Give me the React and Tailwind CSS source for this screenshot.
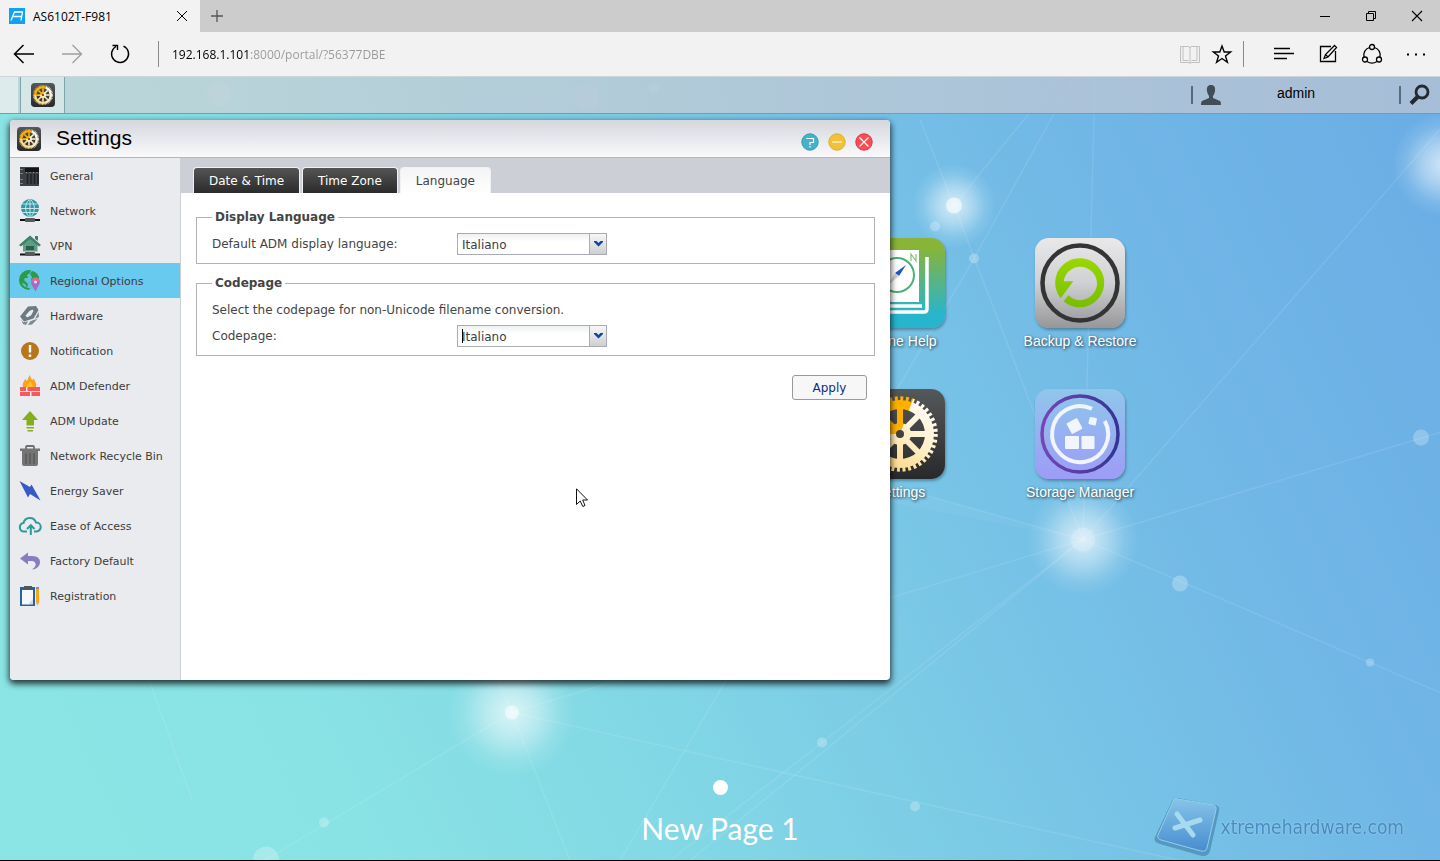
import React, { useId, useState } from 'react';

const GLOWS = [
  { x: 954, y: 206, r: 42, core: 8, alpha: 0.6 },
  { x: 512, y: 713, r: 64, core: 7, alpha: 0.5 },
  { x: 1083, y: 540, r: 56, core: 12, alpha: 0.2 },
  { x: 1444, y: 165, r: 52, core: 0, alpha: 0 },
];

const DOTS = [
  [219, 95, 12], [587, 97, 12], [654, 89, 5], [974, 259, 5], [935, 227, 5], [1421, 438, 8],
  [1180, 584, 8], [1370, 663, 4], [822, 743, 5], [915, 807, 5], [324, 823, 5], [266, 860, 13],
];

const LINES = [
  [920, 120, 954, 206], [954, 206, 1083, 540], [954, 206, 1060, 76], [974, 259, 1075, 76],
  [974, 259, 620, 861], [1083, 540, 1440, 693], [1083, 540, 512, 380], [1083, 540, 1440, 130],
  [1083, 540, 1440, 433], [1083, 540, 690, 861], [1083, 540, 512, 713], [1083, 540, 1095, 76],
  [512, 713, 1180, 861], [512, 713, 266, 860], [512, 713, 570, 861], [512, 713, 420, 500],
  [822, 743, 670, 861], [822, 743, 1083, 540], [120, 600, 192, 800],
];

function Wallpaper() {
  return (
    <svg
      className="absolute inset-0 h-full w-full"
      viewBox="0 76 1440 785"
      preserveAspectRatio="xMidYMid slice"
      aria-hidden="true"
    >
      <defs>
        <linearGradient id="sky" gradientUnits="userSpaceOnUse" x1="0" y1="800" x2="1440" y2="100">
          <stop offset="0" stopColor="#8be5e4" />
          <stop offset="0.2" stopColor="#89e2e4" />
          <stop offset="0.4" stopColor="#81d6e5" />
          <stop offset="0.6" stopColor="#78c5e6" />
          <stop offset="0.8" stopColor="#70b6e6" />
          <stop offset="1" stopColor="#6aade5" />
        </linearGradient>
        <radialGradient id="glow">
          <stop offset="0" stopColor="#fff" stopOpacity="0.7" />
          <stop offset="0.4" stopColor="#fff" stopOpacity="0.42" />
          <stop offset="0.75" stopColor="#fff" stopOpacity="0.12" />
          <stop offset="1" stopColor="#fff" stopOpacity="0" />
        </radialGradient>
      </defs>
      <rect y="76" width="1440" height="785" fill="url(#sky)" />
      <path d="M1083 540L512 380V430Z" fill="#fff" opacity="0.04" />
      <g stroke="#fff" strokeOpacity="0.1" strokeWidth="1.5">
        {LINES.map(([x1, y1, x2, y2], i) => (
          <line key={i} x1={x1} y1={y1} x2={x2} y2={y2} />
        ))}
      </g>
      {GLOWS.map((g) => (
        <g key={g.x}>
          <circle cx={g.x} cy={g.y} r={g.r} fill="url(#glow)" />
          <circle cx={g.x} cy={g.y} r={g.core} fill="#fff" opacity={g.alpha} />
        </g>
      ))}
      {DOTS.map(([x, y, r]) => (
        <circle key={x} cx={x} cy={y} r={r} fill="#fff" opacity="0.25" />
      ))}
    </svg>
  );
}

function GearIcon({ className }) {
  const id = useId();
  return (
    <svg className={className} viewBox="0 0 90 90" aria-hidden="true">
      <defs>
        <linearGradient id={`${id}b`} x1="0" y1="0" x2="0" y2="1">
          <stop offset="0" stopColor="#55585a" />
          <stop offset="1" stopColor="#28292b" />
        </linearGradient>
        <linearGradient id={`${id}g`} x1="0.8" y1="0.1" x2="0.2" y2="0.9">
          <stop offset="0" stopColor="#fff" />
          <stop offset="0.45" stopColor="#fff0cc" />
          <stop offset="1" stopColor="#fbcf70" />
        </linearGradient>
        <mask id={`${id}m`}>
          <circle cx="45" cy="45" r="34" fill="#fff" />
          <circle cx="45" cy="45" r="35" fill="none" stroke="#fff" strokeWidth="5.5" strokeDasharray="2.9 2.6" />
          <circle cx="45" cy="45" r="25" fill="#000" />
          <path
            d="M45 20V70M20 45H70M27 27L63 63M63 27L27 63"
            stroke="#fff"
            strokeWidth="6"
          />
          <circle cx="45" cy="45" r="11" fill="#fff" />
          <circle cx="45" cy="45" r="4" fill="#000" />
        </mask>
      </defs>
      <rect width="90" height="90" rx="14" fill={`url(#${id}b)`} />
      <g mask={`url(#${id}m)`}>
        <rect width="90" height="90" fill={`url(#${id}g)`} />
        <path d="M45 45L62 0H0V45Z" fill="#ffb000" />
      </g>
    </svg>
  );
}

function HelpIcon() {
  return (
    <svg className="size-[90px]" viewBox="0 0 90 90" aria-hidden="true">
      <defs>
        <linearGradient id="help" x1="0" y1="0" x2="0" y2="1">
          <stop offset="0.1" stopColor="#88b438" />
          <stop offset="0.85" stopColor="#27b5cd" />
        </linearGradient>
      </defs>
      <rect width="90" height="90" rx="14" fill="url(#help)" />
      <rect x="14" y="12" width="50" height="52" fill="#fff" />
      <path d="M14 68H67M20 74H69Q72 74 72 71V19" fill="none" stroke="#fff" strokeWidth="3.5" />
      <circle cx="42" cy="37" r="17" fill="none" stroke="#4bb07a" strokeWidth="2" />
      <path d="M51 27L44 38L40 35Z" fill="#2052c8" />
      <path d="M40 35L44 38L32 48Z" fill="#ccd3d8" />
      <path d="M56 23V16L61 23V16" fill="none" stroke="#7cc576" strokeWidth="1.2" />
    </svg>
  );
}

function BackupIcon() {
  return (
    <svg className="size-[90px]" viewBox="0 0 90 90" aria-hidden="true">
      <defs>
        <linearGradient id="bk" x1="0" y1="0" x2="0" y2="1">
          <stop offset="0" stopColor="#e9e9ea" />
          <stop offset="0.5" stopColor="#cfd0d3" />
          <stop offset="1" stopColor="#97979a" />
        </linearGradient>
        <linearGradient id="bkg" x1="0" y1="0" x2="0" y2="1">
          <stop offset="0" stopColor="#9bd800" />
          <stop offset="1" stopColor="#79bd00" />
        </linearGradient>
      </defs>
      <rect width="90" height="90" rx="14" fill="url(#bk)" />
      <circle cx="45" cy="45" r="37.5" fill="none" stroke="#343435" strokeWidth="4.5" />
      <path
        d="M25.700 60.200A24.500 24.500 0 1 1 28.600 63.200L33.500 57.300A16.700 16.700 0 1 0 28.700 43.300H38.300Z"
        fill="url(#bkg)"
      />
    </svg>
  );
}

function StorageIcon() {
  return (
    <svg className="size-[90px]" viewBox="0 0 90 90" aria-hidden="true">
      <defs>
        <linearGradient id="st" x1="0" y1="0" x2="0" y2="1">
          <stop offset="0" stopColor="#90c6ec" />
          <stop offset="1" stopColor="#9d9cf6" />
        </linearGradient>
        <linearGradient id="str" x1="0" y1="0" x2="1" y2="0">
          <stop offset="0" stopColor="#7447b6" />
          <stop offset="1" stopColor="#323690" />
        </linearGradient>
      </defs>
      <rect width="90" height="90" rx="14" fill="url(#st)" />
      <circle cx="45" cy="45" r="38" fill="none" stroke="url(#str)" strokeWidth="3.5" />
      <path d="M57 19.800A28 28 0 1 0 69.800 32" fill="none" stroke="#f0f5fe" strokeWidth="4" />
      <g fill="#f0f5fe">
        <rect x="30" y="47" width="14" height="13" rx="1" />
        <rect x="46.500" y="47" width="13" height="13" rx="1" />
        <rect x="33.500" y="31" width="12" height="12" rx="1" transform="rotate(-28 39.500 37)" />
        <rect x="54" y="28.500" width="7.500" height="7.500" rx="1" transform="rotate(12 58 32)" />
      </g>
    </svg>
  );
}

const menu = [
  {
    label: 'General',
    icon: (
      <>
        <rect x="2" y="3" width="19" height="19" fill="#3d4145" />
        <rect x="7" y="4" width="14" height="4" fill="#121416" />
        <path d="M2 5.500H5M2 9.500H5M2 15.500H5M2 19.500H5" stroke="#3f9c7a" />
        <path d="M9.500 10V20M13 10V20M16.500 10V20M20 10V20" stroke="#1f2224" strokeWidth="1.500" />
        <path d="M8 8.500H20" stroke="#9aa0a4" strokeDasharray="1 2.500" />
      </>
    ),
  },
  {
    label: 'Network',
    icon: (
      <>
        <circle cx="12" cy="9" r="9" fill="#2f98a6" />
        <path
          d="M12 0V18M4.500 5H19.500M3 9.500H21M4.500 13.500H19.500M11 1C6.500 5 6.500 13.500 11 17.500M13 1C17.500 5 17.500 13.500 13 17.500"
          fill="none"
          stroke="#d5ecee"
          strokeWidth="0.900"
        />
        <path d="M2 21H22" stroke="#111" strokeWidth="2" />
        <rect x="7" y="19" width="10" height="4" rx="1" fill="#58595b" />
      </>
    ),
  },
  {
    label: 'VPN',
    icon: (
      <>
        <path d="M5 10L12 4L19.500 10V17.500H5Z" fill="#5d9e84" />
        <path d="M1 11L12 1.500L23 11L21 12.500L12 5L3 12.500ZM17 2H20V7L17 5Z" fill="#3f8168" />
        <rect x="8" y="12" width="8" height="4" fill="#2d5e4d" />
        <path d="M2 20.500H22" stroke="#111" strokeWidth="2" />
        <rect x="7" y="18" width="10" height="4" rx="1" fill="#58595b" />
      </>
    ),
  },
  {
    label: 'Regional Options',
    icon: (
      <>
        <circle cx="11" cy="11" r="10" fill="#5fc3e0" />
        <path
          d="M11 1A10 10 0 0 0 1 11A10 10 0 0 0 11 21L12 19C8 19 5 17 4 14L7 15L9 19L10 15L6 11L7 9L10 9L9 6L12 4L13 1.200ZM14 2L12 5L14 8L13 11H17L21 13V8A10 10 0 0 0 14 2Z"
          fill="#2b9c45"
        />
        <path d="M17.500 22.500C14 16 13 15 13 13A4.500 4.500 0 0 1 22 13C22 15 20.500 16.500 17.500 22.500Z" fill="#a66bc0" />
        <path d="M13 13A4.500 4.500 0 0 1 22 13Z" fill="#d56a98" />
        <circle cx="17.500" cy="13" r="1.500" fill="#e9dcf2" />
      </>
    ),
  },
  {
    label: 'Hardware',
    icon: (
      <>
        <path
          fillRule="evenodd"
          d="M10 2.500L18 2L20.500 6L15.500 14.500L6 17.500L2 12.500ZM11.500 7L7.500 11.500L9 13.500L13 11.500L15.500 7L14.500 5.500Z"
          fill="#6c7a82"
        />
        <path d="M20.500 8L21 13L17 15ZM15.500 16L19.500 15L14 20.500L10 21L12 17.500ZM3 15L5 18L10 17.500L8 21L5 20Z" fill="#7d8b93" />
      </>
    ),
  },
  {
    label: 'Notification',
    icon: (
      <>
        <circle cx="12" cy="12" r="9" fill="#b8761a" />
        <path d="M12 6V13.500M12 15.500V18" stroke="#fff" strokeWidth="2.400" />
      </>
    ),
  },
  {
    label: 'ADM Defender',
    icon: (
      <>
        <path d="M5 13C4 9 6 8 7 5L9 7L11.500 1L14 6L16 4.500C17 8 19 9 18 13Z" fill="#faa21b" />
        <path d="M9 13C9 10 11 10 12 7C13 10 15 10 15 13Z" fill="#fdc22e" />
        <path d="M2 13H8V17H2ZM9.500 13H22V17H9.500ZM2 18H12V22H2ZM13.500 18H22V22H13.500Z" fill="#f9575c" />
      </>
    ),
  },
  {
    label: 'ADM Update',
    icon: <path d="M12 2L20 11H16V16.500H8.500V11H4ZM8.500 18H16V19.500H8.500ZM9.500 21H15V22.500H9.500Z" fill="#86ae1c" />,
  },
  {
    label: 'Network Recycle Bin',
    icon: (
      <>
        <path d="M8 5V3Q8 2 9 2H15Q16 2 16 3V5" fill="none" stroke="#6f6f6f" strokeWidth="1.800" />
        <path d="M2 4.500H22V7H2ZM4 7H20V20Q20 22 18 22H6Q4 22 4 20Z" fill="#747474" />
        <path d="M8 9.500V20M12 9.500V20M16 9.500V20" stroke="#555" strokeWidth="1.300" />
      </>
    ),
  },
  {
    label: 'Energy Saver',
    icon: <path d="M1.500 2L12 8L13.500 5.500L22.500 21.500L12 15L10 18.500Z" fill="#3758c8" />,
  },
  {
    label: 'Ease of Access',
    icon: (
      <path
        d="M9 17.500H5.500A4.300 4.300 0 0 1 5.500 9A6.500 6.500 0 0 1 18 8.500A4.500 4.500 0 0 1 18.500 17.500H16M12.800 21V12M9 15L12.800 11.200L16.500 15"
        fill="none"
        stroke="#2f9a9a"
        strokeWidth="2"
      />
    ),
  },
  {
    label: 'Factory Default',
    icon: <path d="M2 9.500L10 3.500V7H14C20 7 22 10 22 13C22 17 19 20 14 20.500C17.500 18 18 16.500 17.500 14.500C17 12.500 15 12 13 12H10V15.500Z" fill="#8a7cbd" />,
  },
  {
    label: 'Registration',
    icon: (
      <>
        <rect x="2" y="3" width="15" height="19" fill="#2563a0" />
        <path d="M4 6H15V16L11 20.500H4Z" fill="#f4f8fb" />
        <path d="M15 15V20.500H10Z" fill="#cfdde9" />
        <rect x="6" y="2" width="8" height="4" fill="#4c5964" />
        <path d="M18 4H21V18L19.500 22L18 18Z" fill="#f6a81c" />
        <path d="M18 3H21V5H18Z" fill="#8a8f95" />
      </>
    ),
  },
];

const apps = [
  { name: 'Online Help', icon: <HelpIcon />, cell: 'col-start-5' },
  { name: 'Backup & Restore', icon: <BackupIcon />, cell: 'col-start-6' },
  { name: 'Settings', icon: <GearIcon className="size-[90px]" />, cell: 'col-start-5' },
  { name: 'Storage Manager', icon: <StorageIcon />, cell: 'col-start-6' },
];

function IconButton({ label, className, children }) {
  return (
    <button
      type="button"
      aria-label={label}
      className={`flex h-full shrink-0 items-center justify-center ${className}`}
    >
      <svg
        className="size-6"
        viewBox="0 0 24 24"
        fill="none"
        stroke="currentColor"
        strokeWidth="1.3"
        aria-hidden="true"
      >
        {children}
      </svg>
    </button>
  );
}

function BrowserChrome() {
  const [url, setUrl] = useState('192.168.1.101:8000/portal/?56377DBE');

  return (
    <header className="shrink-0 bg-[#f2f2f2] font-['Open_Sans',sans-serif] text-xs text-black">
      <div className="flex h-8 bg-[#cccccc]">
        <div className="flex w-[200px] items-center bg-[#f2f2f2] pl-[9px]">
          <svg className="size-4" viewBox="0 0 16 16" aria-hidden="true">
            <rect width="16" height="16" fill="#0da2f5" />
            <path d="M2 12.500L5.500 4H13.500L12 12.500M4.500 8.500H12.500" fill="none" stroke="#fff" strokeWidth="1.300" />
          </svg>
          <span className="mt-0.5 ml-2 flex-1">AS6102T-F981</span>
          <IconButton label="Close tab" className="w-9">
            <path d="M7 7L17 17M17 7L7 17" strokeWidth="1" />
          </IconButton>
        </div>
        <IconButton label="New tab" className="w-[34px] text-[#555]">
          <path d="M12 6V18M6 12H18" />
        </IconButton>
        <div className="flex-1" />
        <IconButton label="Minimize" className="w-[46px]">
          <path d="M7 12.500H17" strokeWidth="1" />
        </IconButton>
        <IconButton label="Restore" className="w-[46px]">
          <path d="M7.500 9.500H14.500V16.500H7.500ZM9.500 9.500V7.500H16.500V14.500H14.500" strokeWidth="1" />
        </IconButton>
        <IconButton label="Close" className="w-[46px]">
          <path d="M7 7L17 17M17 7L7 17" strokeWidth="1.100" />
        </IconButton>
      </div>
      <div className="flex h-11 items-center pr-0.5">
        <IconButton label="Back" className="w-12">
          <path d="M22 12H3M11.500 3L2.500 12L11.500 21" strokeWidth="1.500" />
        </IconButton>
        <IconButton label="Forward" className="w-12 text-[#a0a0a0]">
          <path d="M2 12H21M12.500 3L21.500 12L12.500 21" strokeWidth="1.400" />
        </IconButton>
        <IconButton label="Refresh" className="w-12">
          <path d="M15.500 4.200A8.500 8.500 0 1 1 8 4.500M4.500 3.500H9.500V8" strokeWidth="1.400" />
        </IconButton>
        <div className="ml-3.5 h-[26px] w-px bg-[#8a8a8a]" />
        <input
          type="text"
          aria-label="Address"
          value={url}
          onChange={(e) => setUrl(e.target.value)}
          className="mt-0.5 ml-[13px] min-w-0 flex-1 bg-[linear-gradient(to_right,#000_78px,#999_78px)] bg-clip-text text-transparent caret-black outline-none"
        />
        <IconButton label="Reading view" className="w-8 text-[#c0c0c0]">
          <path d="M2.500 4.500H10Q12 4.500 12 6Q12 4.500 14 4.500H21.500V20.500H14Q12 20.500 12 21.500Q12 20.500 10 20.500H2.500ZM12 6V21M5 4.500V18.500H10.500M19 4.500V18.500H13.500" strokeWidth="1" />
        </IconButton>
        <IconButton label="Add to favorites" className="w-8">
          <path d="M12 4L14.200 10H20.600L15.500 13.900L17.400 20.300L12 16.500L6.600 20.300L8.500 13.900L3.400 10H9.800Z" strokeWidth="1.400" />
        </IconButton>
        <div className="mr-[18px] ml-[5px] h-[26px] w-px bg-[#8a8a8a]" />
        <IconButton label="Hub" className="w-11">
          <path d="M2 6.500H18M2 11.500H22M2 16.500H15" />
        </IconButton>
        <IconButton label="Web note" className="w-11">
          <path d="M15 4.500H4.500V19.500H19.500V9M8 16.500L9.500 12.500L18.500 3.500L20.500 5.500L12 15ZM9.500 12.500L12 15" strokeWidth="1.300" />
        </IconButton>
        <IconButton label="Share" className="w-11">
          <circle cx="12" cy="5" r="2.500" />
          <circle cx="5" cy="17.500" r="2.500" />
          <circle cx="19" cy="17.500" r="2.500" />
          <path d="M9.500 5.500C5 7 3.500 11 4 15M14.500 5.500C19 7 20.500 11 20 15M7 19.500C10 21.500 14 21.500 17 19.500" />
        </IconButton>
        <IconButton label="More" className="w-11">
          <path d="M3 12.500H5M11 12.500H13M19 12.500H21" strokeWidth="2" />
        </IconButton>
      </div>
    </header>
  );
}

function Taskbar() {
  return (
    <div className="relative flex h-[38px] items-stretch border-t border-b border-t-[#ccd6da] border-b-[#6f9fb0] bg-gradient-to-r from-[#c4d5d7]/85 to-[#adbfd6]/90">
      <div className="w-[18px] bg-white/50" />
      <button
        type="button"
        aria-label="Settings"
        className="ml-0.5 flex w-[45px] items-center justify-center border-r border-l border-[#7fa5ab] bg-white/40"
      >
        <GearIcon className="size-6" />
      </button>
      <div className="flex-1" />
      <div className="flex w-[208px] items-center text-[#3d4a54]">
        <div className="h-[18px] w-0.5 bg-[#5b6a78]" />
        <svg className="ml-1.5 size-6" viewBox="0 0 24 24" aria-hidden="true">
          <path d="M12 2C8.500 2 7.500 4.500 8 8C8.300 10.500 9.500 12 10 13V15L3 18Q2 18.500 2 22H22Q22 18.500 21 18L14 15V13C14.500 12 15.700 10.500 16 8C16.500 4.500 15.500 2 12 2Z" fill="#424d57" />
        </svg>
        <button type="button" className="h-full flex-1 pr-[30px] pb-1 font-['Liberation_Sans',sans-serif] text-sm text-black">
          admin
        </button>
      </div>
      <div className="flex w-[41px] items-center">
        <div className="h-[18px] w-0.5 bg-[#5b6a78]" />
        <button type="button" aria-label="Search" className="flex flex-1 justify-center pr-0.5">
          <svg className="size-6" viewBox="0 0 24 24" fill="none" stroke="#22292f" aria-hidden="true">
            <circle cx="14" cy="9" r="6" strokeWidth="2.800" />
            <path d="M9.500 14L3 20.500" strokeWidth="4" />
          </svg>
        </button>
      </div>
    </div>
  );
}

function Combo({ id, value, onChange, caret }) {
  return (
    <div className="relative w-[150px]">
      <select
        id={id}
        value={value}
        onChange={(e) => onChange(e.target.value)}
        className="block h-[22px] w-full appearance-none border border-[#a9acb5] bg-gradient-to-b from-[#eef1f2] to-white to-40% pt-px pl-1 text-xs text-[#3c3c3c] outline-none"
      >
        <option>Italiano</option>
        <option>English</option>
      </select>
      {caret && <span className="pointer-events-none absolute top-1 left-[5px] h-3.5 w-px bg-black" />}
      <span className="pointer-events-none absolute inset-y-px right-px flex w-[17px] items-center justify-center border-l border-[#a9acb5] bg-gradient-to-b from-[#f7f7f8] to-[#cfcfd2]">
        <svg className="mb-px h-[6px] w-[9px]" viewBox="0 0 9 6" aria-hidden="true">
          <path d="M0 0H2.500L4.500 2L6.500 0H9V1L4.500 5.500L0 1Z" fill="#0b45a0" />
        </svg>
      </span>
    </div>
  );
}

const tabs = ['Date & Time', 'Time Zone', 'Language'];

function LanguagePanel() {
  const [language, setLanguage] = useState('Italiano');
  const [codepage, setCodepage] = useState('Italiano');

  return (
    <form className="px-[15px] pt-4 text-xs text-[#444]" onSubmit={(e) => e.preventDefault()}>
      <fieldset className="border border-[#b1b3bb] pb-2 pl-[15px]">
        <legend className="px-[3px] leading-4 font-bold">Display Language</legend>
        <div className="mt-2 flex items-center">
          <label htmlFor="language" className="w-[245px]">Default ADM display language:</label>
          <Combo id="language" value={language} onChange={setLanguage} />
        </div>
      </fieldset>
      <fieldset className="mt-[11px] border border-[#b1b3bb] pb-2 pl-[15px]">
        <legend className="px-[3px] leading-4 font-bold">Codepage</legend>
        <p className="mt-[11px] leading-4">Select the codepage for non-Unicode filename conversion.</p>
        <div className="mt-[7px] flex items-center">
          <label htmlFor="codepage" className="w-[245px]">Codepage:</label>
          <Combo id="codepage" value={codepage} onChange={setCodepage} caret />
        </div>
      </fieldset>
      <div className="mt-[19px] flex justify-end pr-2">
        <button
          type="submit"
          className="h-[25px] w-[75px] rounded-[3px] border border-[#999] bg-[#f7f7f8] text-[#0b2f86]"
        >
          Apply
        </button>
      </div>
    </form>
  );
}

function SettingsWindow() {
  const [section, setSection] = useState('Regional Options');
  const [tab, setTab] = useState('Language');

  return (
    <section className="absolute top-1.5 left-2.5 flex h-[560px] w-[880px] flex-col overflow-hidden rounded-[4px] bg-white font-['DejaVu_Sans',sans-serif] shadow-[0_3px_6px_1px_rgba(0,0,0,0.75)]">
      <div className="flex h-[38px] shrink-0 items-center border-b border-[#b4b6bd] bg-gradient-to-b from-[#d5d7dd] to-[#fafafb] pr-[17px] pl-[7px]">
        <GearIcon className="size-6" />
        <h1 className="ml-[15px] flex-1 pb-0.5 font-['Liberation_Sans',sans-serif] text-[21px] leading-8 text-black">
          Settings
        </h1>
        <div className="mt-1.5 flex gap-[9px]">
          <button type="button" aria-label="Help" className="size-[18px]">
            <svg viewBox="0 0 18 18" fill="none" stroke="#fff" aria-hidden="true">
              <circle cx="9" cy="9" r="8.2" fill="#44b2c8" stroke="#369bb0" />
              <path d="M5.500 5.500H12.500V9.500H9V12M9 13V14.500" strokeWidth="1.200" />
            </svg>
          </button>
          <button type="button" aria-label="Minimize window" className="size-[18px]">
            <svg viewBox="0 0 18 18" fill="none" stroke="#fff" aria-hidden="true">
              <circle cx="9" cy="9" r="8.2" fill="#efc23a" stroke="#dcae2c" />
              <path d="M4 9H14" strokeWidth="1.200" />
            </svg>
          </button>
          <button type="button" aria-label="Close window" className="size-[18px]">
            <svg viewBox="0 0 18 18" fill="none" stroke="#fff" aria-hidden="true">
              <circle cx="9" cy="9" r="8.2" fill="#fa4c54" stroke="#e2343e" />
              <path d="M4.500 4.500L13.500 13.500M13.500 4.500L4.500 13.500" strokeWidth="1.100" />
            </svg>
          </button>
        </div>
      </div>
      <div className="flex flex-1">
        <nav className="w-[171px] shrink-0 border-r border-[#cdcfd7] bg-[#e9ebef]">
          {menu.map((item) => (
            <button
              key={item.label}
              type="button"
              onClick={() => setSection(item.label)}
              className={`flex h-[35px] w-full items-center gap-2 pl-2 text-left text-[11px] text-[#3c3c3c] ${
                section === item.label ? 'bg-[#68caee]' : ''
              }`}
            >
              <svg className="size-6 shrink-0" viewBox="0 0 24 24" aria-hidden="true">
                {item.icon}
              </svg>
              <span className="pt-[3px]">{item.label}</span>
            </button>
          ))}
        </nav>
        <div className="flex-1">
          <div className="flex h-[35px] items-end gap-0.5 bg-[#cdcfd7] pl-3 text-xs" role="tablist">
            {tabs.map((name) => (
              <button
                key={name}
                type="button"
                role="tab"
                aria-selected={tab === name}
                onClick={() => setTab(name)}
                className={`h-[26px] rounded-t-[4px] border border-b-0 border-[#f0f1f4] bg-gradient-to-b px-[15px] ${
                  tab === name ? 'from-[#f4f4f6] to-white text-[#444]' : 'from-[#555] to-[#2b2b2b] text-white'
                }`}
              >
                {name}
              </button>
            ))}
          </div>
          <LanguagePanel />
        </div>
      </div>
    </section>
  );
}

function Watermark() {
  return (
    <div className="absolute right-9 bottom-0 flex items-center opacity-80">
      <svg className="h-[66px] w-[68px]" viewBox="0 0 68 66" aria-hidden="true">
        <defs>
          <linearGradient id="wm" x1="0" y1="0" x2="0" y2="1">
            <stop offset="0" stopColor="#8cc6ea" />
            <stop offset="1" stopColor="#3c80cc" />
          </linearGradient>
        </defs>
        <path d="M20 5Q22 3 25 4L62 11Q67 12 66 17L57 57Q55 63 49 62L7 50Q0 48 2 43Z" fill="#4d8fb8" />
        <path d="M21 5Q23 4 25 5L60 11Q64 12 63 16L54 54Q53 58 48 57L8 46Q4 45 5 41Z" fill="url(#wm)" stroke="#9bd3ea" />
        <path d="M24 20L40 41M47 26L22 34" stroke="#b4e0f2" strokeWidth="5" strokeLinecap="round" />
      </svg>
      <a
        href="#site"
        className="font-['DejaVu_Sans_Condensed','DejaVu_Sans',sans-serif] text-[19px] text-[#3f7fb8] [text-shadow:0_0_2px_rgba(255,255,255,0.5)]"
      >
        xtremehardware.com
      </a>
    </div>
  );
}

function Desktop() {
  return (
    <main className="relative flex flex-1 flex-col">
      <div className="grid flex-1 auto-rows-[151px] grid-cols-[repeat(6,180px)] pt-[124px] pl-[90px]">
        {apps.map((app) => (
          <a
            key={app.name}
            href="#app"
            className={`flex flex-col items-center font-['Liberation_Sans',sans-serif] text-sm text-white ${app.cell}`}
          >
            <span className="rounded-[14px] shadow-[1px_2px_3px_rgba(0,0,0,0.3)]">{app.icon}</span>
            <span className="mt-[3px] [text-shadow:1px_1px_3px_rgba(0,0,0,0.8)]">{app.name}</span>
          </a>
        ))}
      </div>
      <footer className="flex flex-col items-center pb-3">
        <button type="button" aria-label="Page 1" className="size-[15px] rounded-full bg-white" />
        <p className="mt-[13px] font-['Lato',sans-serif] text-[30px] leading-10 text-white">New Page 1</p>
      </footer>
      <Watermark />
      <SettingsWindow />
      <svg className="pointer-events-none absolute top-[374px] left-[576px] h-5 w-3" viewBox="0 0 12 20" aria-hidden="true">
        <path d="M.5 .8V16.500L4.200 13L6.800 18.500L9 17.500L6.700 12H11.500Z" fill="#fff" stroke="#111" />
      </svg>
    </main>
  );
}

function App() {
  return (
    <div className="flex h-screen flex-col overflow-hidden border-b border-black">
      <BrowserChrome />
      <div className="relative flex flex-1 flex-col">
        <Wallpaper />
        <Taskbar />
        <Desktop />
      </div>
    </div>
  );
}

export default App;
